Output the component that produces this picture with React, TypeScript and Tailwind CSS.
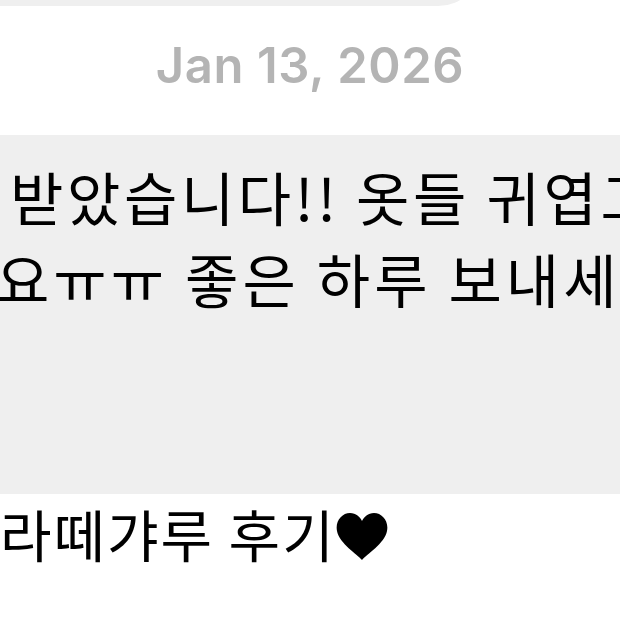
export default function App() {
  const kr = { fontFamily: '"Noto Sans CJK KR", "Noto Sans", sans-serif' };

  return (
    <div className="w-[620px] h-[620px] overflow-hidden bg-white flex flex-col">
      {/* previous bubble, cut off at the top */}
      <div className="h-[46px] -mt-[40px] w-[482px] shrink-0 rounded-br-[44px] bg-[#efefef]" />

      {/* date separator */}
      <div className="h-[129px] shrink-0 flex justify-center pt-[35px]">
        <span
          className="text-[49px] leading-none font-semibold text-[#b4b4b4] tracking-[0.6px]"
          style={{ fontFamily: 'Inter, "Liberation Sans", sans-serif' }}
        >
          Jan 13, 2026
        </span>
      </div>

      {/* incoming message bubble */}
      <div className="h-[359px] shrink-0 bg-[#efefef] overflow-hidden pt-[20px]" style={kr}>
        <p className="whitespace-nowrap text-[58px] leading-[82px] tracking-[3.6px] text-black pl-[10px]">
          받았습니다!! 옷들 귀엽고
        </p>
        <p className="whitespace-nowrap text-[58px] leading-[82px] tracking-[4px] text-black -ml-[4px]">
          요ㅠㅠ 좋은 하루 보내세요
        </p>
      </div>

      {/* caption */}
      <div className="flex items-center pt-[3px]" style={kr}>
        <span className="whitespace-nowrap text-[56px] leading-[72px] tracking-[2px] text-black">라떼갸루 후기</span>
        <svg className="w-[52px] h-[47px] mt-[6px]" viewBox="0 0 52 47" fill="black">
          <path d="M26 47 C22 42 3 30 1 18 C-1 8 6 0 14 0 C20 0 24 4 26 8 C28 4 32 0 38 0 C46 0 53 8 51 18 C49 30 30 42 26 47 Z" />
        </svg>
      </div>
    </div>
  );
}
